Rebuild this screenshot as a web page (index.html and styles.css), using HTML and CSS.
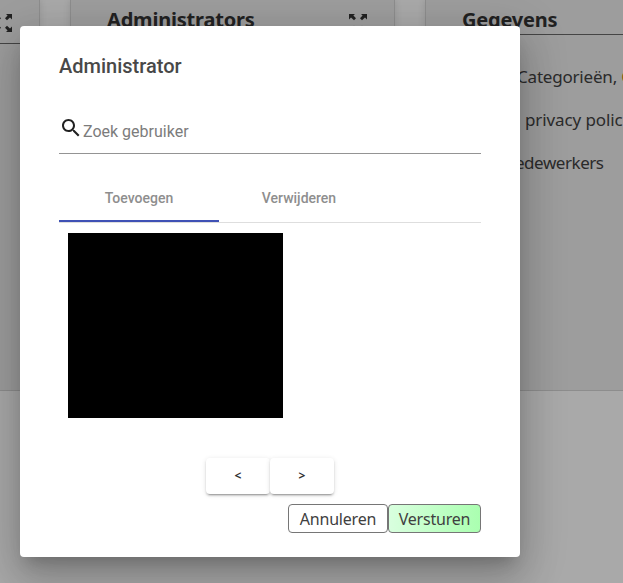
FILE: index.html
```html
<!DOCTYPE html>
<html lang="nl">
<head>
<meta charset="utf-8">
<title>Administrator</title>
<link rel="stylesheet" href="styles.css">
</head>
<body>
<main class="board">
  <section class="card card-first">
    <header class="card-head tall">
      <svg class="expand" viewBox="0 0 18 18"><path id="arrows" d="M0 0h6L4.400 1.600 7 4.300 5 6.200 2 3.500 0 5.500zM18 0h-6l1.600 1.600L11 4.300l2 1.900 3-2.700 2 2zM0 18h6l-1.600-1.600L7 13.700l-2-1.900-3 2.700-2-2zM18 18h-6l1.600-1.600-2.600-2.700 2-1.900 3 2.700 2-2z"/></svg>
    </header>
  </section>
  <section class="card">
    <header class="card-head">
      <h2 class="title-admins">Administrators</h2>
      <svg class="expand" viewBox="0 0 18 18"><use href="#arrows"/></svg>
    </header>
  </section>
  <section class="card card-last">
    <header class="card-head">
      <h2 class="title-data">Gegevens</h2>
    </header>
    <ul class="links">
      <li class="link-categories">Categorieën, <span class="accent">C</span></li>
      <li class="link-privacy">privacy polic</li>
      <li class="link-staff">Medewerkers</li>
    </ul>
  </section>
</main>
<div class="overlay">
  <div class="dialog" role="dialog">
    <h1>Administrator</h1>
    <div class="search">
      <svg viewBox="0 0 24 24"><path d="M15.500 14h-.79l-.28-.27C15.410 12.590 16 11.110 16 9.500 16 5.910 13.090 3 9.500 3S3 5.910 3 9.500 5.910 16 9.500 16c1.610 0 3.090-.59 4.230-1.570l.27.28v.79l5 4.990L20.490 19l-4.990-5zm-6 0C7.010 14 5 11.990 5 9.500S7.010 5 9.500 5 14 7.010 14 9.500 11.990 14 9.500 14z"/></svg>
      <span>Zoek gebruiker</span>
    </div>
    <nav class="tabs">
      <div class="tab active">Toevoegen</div>
      <div class="tab">Verwijderen</div>
    </nav>
    <div class="results"></div>
    <div class="pager">
      <button>&lt;</button>
      <button>&gt;</button>
    </div>
    <div class="actions">
      <button class="cancel">Annuleren</button>
      <button class="submit">Versturen</button>
    </div>
  </div>
</div>
</body>
</html>
```

FILE: styles.css
```css
* { box-sizing: border-box; }
body {
  margin: 0;
  height: 583px;
  overflow: hidden;
  background: #f9f9f9;
  font-family: "Noto Sans", "Open Sans", sans-serif;
  color: #333;
}
.board {
  display: flex;
  gap: 30px;
  width: 100%;
  height: 391px;
  overflow: hidden;
}
.card {
  flex: none;
  width: 325px;
  background: #e7e7e7;
  border: 1px solid #d0d0d0;
  border-top: 0;
  box-shadow: 0 0 7px rgba(0, 0, 0, .12);
}
.card-first { width: 40px; border-left: 0; }
.card-last { width: 198px; border-right: 0; }
.card-head {
  display: flex;
  justify-content: space-between;
  height: 35px;
  border-bottom: 1px solid #666;
}
.card-head.tall { height: 44px; }
.expand {
  flex: none;
  width: 18px;
  height: 18px;
  margin: 14px 27px 0 0;
  fill: #333;
}
.tall .expand { margin-left: -6px; margin-right: 0; }
h2 {
  margin: 5px 0 0;
  font: 700 20px/30px "Noto Sans", sans-serif;
  letter-spacing: -.2px;
  white-space: nowrap;
}
.title-admins, .title-data { padding-left: 36px; }
.links {
  margin: 20px 0 0;
  padding: 0;
  list-style: none;
  font-size: 17px;
  line-height: 43px;
  letter-spacing: -.45px;
  white-space: nowrap;
  color: #404040;
}
.link-categories { padding-left: 91px; letter-spacing: -.2px; }
.link-privacy { padding-left: 99px; letter-spacing: -.1px; }
.link-staff { padding-left: 74px; }
.accent { color: #c07810; }
.overlay {
  position: absolute;
  inset: 0;
  padding: 26px 0 0 20px;
  background: rgba(0, 0, 0, .32);
}
.dialog {
  display: flex;
  flex-direction: column;
  width: 500px;
  height: 531px;
  padding: 24px 39px;
  background: #fff;
  border-radius: 4px;
  box-shadow: 0 11px 15px -7px rgba(0,0,0,.2), 0 24px 38px 3px rgba(0,0,0,.14), 0 9px 46px 8px rgba(0,0,0,.12);
}
h1 {
  margin: 0;
  font: 500 20px/32px Roboto, sans-serif;
  color: #484848;
}
.search {
  display: flex;
  height: 46px;
  margin-top: 26px;
  border-bottom: 1px solid #949494;
  font-family: Roboto, sans-serif;
  font-size: 16px;
  color: #7c7c7c;
}
.search svg { width: 24px; height: 24px; margin-top: 8px; fill: #212121; }
.search span { padding-top: 12px; line-height: 24px; }
.tabs {
  display: flex;
  height: 49px;
  margin-top: 20px;
  border-bottom: 1px solid #dedede;
}
.tab {
  width: 160px;
  height: 48px;
  text-align: center;
  font: 500 14px/48px Roboto, sans-serif;
  color: #8e8e8e;
}
.tab.active { border-bottom: 2px solid #3f51b5; }
.results {
  width: 215px;
  height: 185px;
  margin: 10px 0 0 9px;
  background: #000;
}
.pager { display: flex; justify-content: center; margin-top: 40px; }
.pager button {
  width: 64px;
  height: 36px;
  padding: 0;
  border: 0;
  border-radius: 4px;
  background: #fff;
  color: #333;
  font: 700 12px/34px "Open Sans", sans-serif;
  box-shadow: 0 3px 1px -2px rgba(0,0,0,.2), 0 2px 2px rgba(0,0,0,.14), 0 1px 5px rgba(0,0,0,.12);
}
.actions { display: flex; justify-content: flex-end; margin-top: 10px; }
.actions button {
  height: 29px;
  padding: 1px 0 0;
  border: 1px solid #767676;
  border-radius: 4px;
  font: 400 16px/26px "Noto Sans", sans-serif;
  letter-spacing: -.2px;
  color: #404040;
}
.actions .cancel { width: 100px; background: #fff; }
.actions .submit { width: 93px; background: linear-gradient(to right, #d9ffdf, #aaffb0); }
```
